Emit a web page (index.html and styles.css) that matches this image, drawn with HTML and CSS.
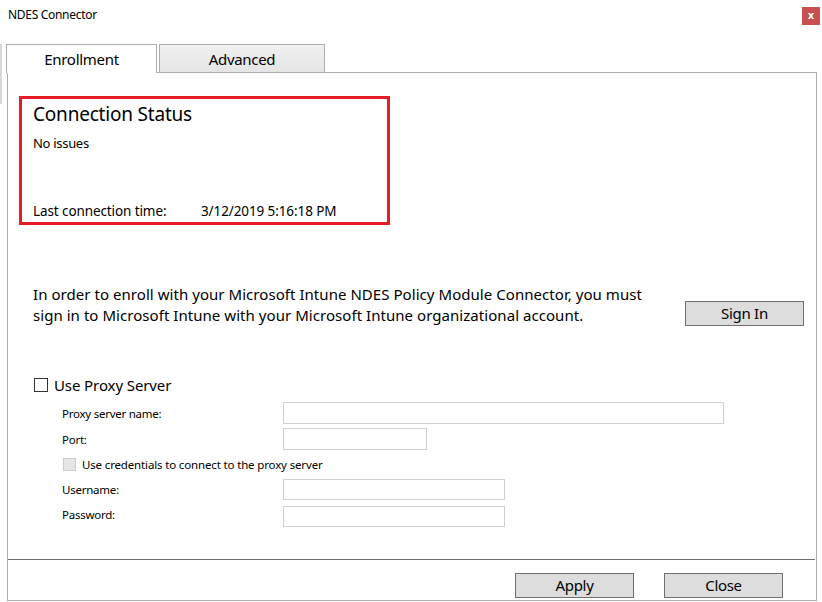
FILE: index.html
```html
<!DOCTYPE html>
<html>
<head>
<meta charset="utf-8">
<link rel="stylesheet" href="styles.css">
<title>NDES Connector</title>
</head>
<body>
<div class="window">
  <div class="edge"></div>
  <div class="titlebar">
    <span class="title">NDES Connector</span>
    <span class="close">x</span>
  </div>
  <div class="tabs">
    <div class="tab active">Enrollment</div>
    <div class="tab">Advanced</div>
  </div>
  <div class="panel">
    <div class="status">
      <div class="status-title">Connection Status</div>
      <div class="status-msg">No issues</div>
      <div class="status-time">
        <span class="time-label">Last connection time:</span>
        <span class="time-value">3/12/2019 5:16:18 PM</span>
      </div>
    </div>
    <div class="signin-row">
      <p class="intro">In order to enroll with your Microsoft Intune NDES Policy Module Connector, you must sign in to Microsoft Intune with your Microsoft Intune organizational account.</p>
      <button class="btn signin">Sign In</button>
    </div>
    <div class="proxy">
      <label class="proxy-check"><span class="box"></span>Use Proxy Server</label>
      <div class="fields">
        <div class="field"><span class="flabel">Proxy server name:</span><span class="input w-name"></span></div>
        <div class="field"><span class="flabel">Port:</span><span class="input w-port"></span></div>
        <div class="cred"><span class="box disabled"></span>Use credentials to connect to the proxy server</div>
        <div class="field user"><span class="flabel">Username:</span><span class="input w-user"></span></div>
        <div class="field pass"><span class="flabel">Password:</span><span class="input w-user"></span></div>
      </div>
    </div>
    <div class="sep"></div>
    <div class="footer">
      <button class="btn foot">Apply</button>
      <button class="btn foot">Close</button>
    </div>
  </div>
</div>
</body>
</html>
```
FILE: styles.css
```css
* { box-sizing: border-box; }
html, body { margin: 0; padding: 0; background: #ffffff; }
body { width: 822px; height: 602px; overflow: hidden; font-family: "Noto Sans", "Open Sans", sans-serif; color: #000; }

.window { position: relative; width: 822px; height: 602px; }

.edge { position: absolute; left: 0; top: 44px; width: 2px; height: 60px; background: #d8d8d8; }

.titlebar { height: 44px; display: flex; align-items: flex-start; justify-content: space-between; }
.title { font-size: 12px; margin: 7px 0 0 8px; line-height: 16px; letter-spacing: -0.3px; }
.close { width: 18px; height: 18px; margin: 7px 2px 0 0; background: #c9504f; color: #fff; font-size: 10px; font-weight: bold; line-height: 17px; text-align: center; font-family: "DejaVu Sans", sans-serif; }

.tabs { display: flex; height: 28px; margin-left: 6px; align-items: flex-end; position: relative; z-index: 1; }
.tab { height: 28px; border: 1px solid #acacac; border-bottom: none; font-size: 15px; line-height: 28px; text-align: center; letter-spacing: -0.3px; }
.tab.active { width: 151px; background: #fff; height: 29px; margin-bottom: -1px; }
.tab:not(.active) { width: 166px; margin-left: 2px; height: 28px; background: linear-gradient(#f0f0f0, #e5e5e5); }

.panel { margin-left: 7px; width: 810px; height: 529px; border: 1px solid #acacac; display: flex; flex-direction: column; }

.status { margin: 23px 0 0 11px; width: 371px; height: 129px; border: 3px solid #e81c24; padding: 2px 0 0 11px; }
.status-title { font-size: 19px; line-height: 26px; letter-spacing: -0.2px; }
.status-msg { font-size: 13px; line-height: 18px; margin-top: 7px; letter-spacing: -0.3px; }
.status-time { font-size: 13.5px; line-height: 18px; margin-top: 50px; display: flex; letter-spacing: -0.1px; }
.time-label { width: 168px; }

.signin-row { display: flex; margin-top: 59px; padding-left: 25px; align-items: flex-start; }
.intro { margin: 0; width: 630px; padding-right: 10px; font-size: 15px; line-height: 21px; letter-spacing: 0.05px; }
.btn { font-family: inherit; background: #dddddd; border: 1px solid #707070; padding: 0; color: #000; font-size: 15px; letter-spacing: -0.3px; }
.signin { width: 119px; height: 25px; margin: 17px 0 0 22px; line-height: 23px; }

.proxy { margin-top: 49px; padding-left: 26px; }
.proxy-check { display: flex; align-items: center; font-size: 15px; line-height: 20px; letter-spacing: -0.1px; }
.box { width: 14px; height: 14px; border: 1px solid #333; background: #fff; margin-right: 6px; flex: none; }
.fields { padding-left: 28px; margin-top: 7px; }
.field { display: flex; align-items: center; font-size: 11.5px; height: 22px; margin-bottom: 4px; letter-spacing: -0.25px; }
.flabel { width: 221px; }
.input { height: 22px; border: 1px solid #d0d0d0; background: #fff; }
.w-name { width: 441px; }
.w-port { width: 144px; }
.w-user { width: 222px; height: 21px; }
.field.user { height: 21px; margin-bottom: 6px; }
.field.pass { height: 21px; }
.field.pass .flabel { padding-bottom: 5px; }
.cred { display: flex; align-items: center; font-size: 11.5px; height: 20px; margin: 0 0 5px 1px; letter-spacing: -0.15px; }
.box.disabled { width: 13px; height: 13px; background: #e6e6e6; border-color: #cccccc; }

.sep { margin-top: 28px; height: 1px; background: #6f6f6f; margin-left: 0; width: 807px; }
.footer { display: flex; margin-top: 13px; padding-left: 507px; gap: 30px; }
.foot { width: 119px; height: 25px; line-height: 23px; }
```
